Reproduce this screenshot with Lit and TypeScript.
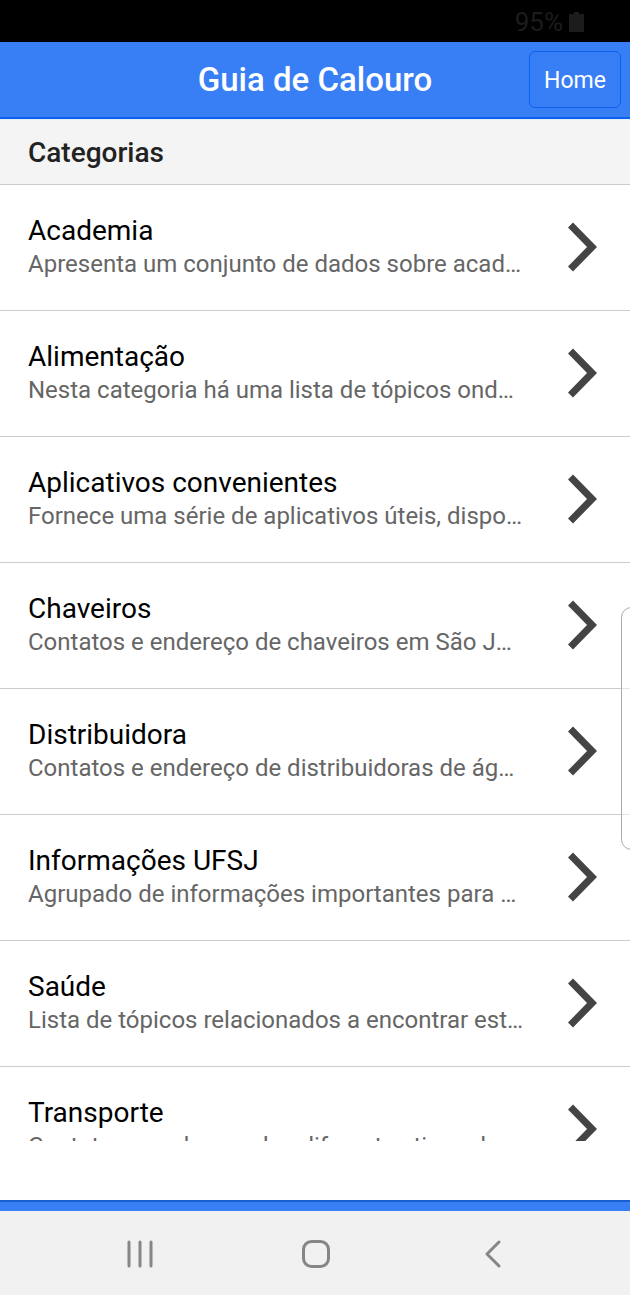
import { LitElement, html, css } from "lit";
import { customElement, property } from "lit/decorators.js";

interface Category {
  name: string;
  summary: string;
}

const CATEGORIES: Category[] = [
  { name: "Academia", summary: "Apresenta um conjunto de dados sobre acad…" },
  { name: "Alimentação", summary: "Nesta categoria há uma lista de tópicos ond…" },
  { name: "Aplicativos convenientes", summary: "Fornece uma série de aplicativos úteis, dispo…" },
  { name: "Chaveiros", summary: "Contatos e endereço de chaveiros em São J…" },
  { name: "Distribuidora", summary: "Contatos e endereço de distribuidoras de ág…" },
  { name: "Informações UFSJ", summary: "Agrupado de informações importantes para …" },
  { name: "Saúde", summary: "Lista de tópicos relacionados a encontrar est…" },
  { name: "Transporte", summary: "Contatos e endereço dos diferentes tipos de …" },
];

@customElement("category-item")
export class CategoryItem extends LitElement {
  @property({ attribute: false }) category!: Category;

  static styles = css`
    :host {
      display: block;
    }
    .row {
      display: flex;
      align-items: center;
      justify-content: space-between;
      gap: 28px;
      padding: 29px 33px 30px 28px;
      border-bottom: 1px solid #ccc;
      color: #000;
      text-decoration: none;
    }
    .text {
      min-width: 0;
    }
    .name {
      margin: 0;
      font-size: 28px;
      line-height: 34px;
      font-weight: 400;
    }
    .summary {
      margin: 0;
      font-size: 24px;
      line-height: 32px;
      color: #666;
      white-space: nowrap;
      overflow: hidden;
    }
    .chevron {
      flex: none;
      width: 29px;
      height: 50px;
      fill: #444;
    }
  `;

  render() {
    return html`
      <a class="row" href="#">
        <div class="text">
          <h3 class="name">${this.category.name}</h3>
          <p class="summary">${this.category.summary}</p>
        </div>
        <svg class="chevron" viewBox="0 0 29 50" aria-hidden="true">
          <path d="M5 .5L29 25 5 49.500 0 44.500 19 25 0 5.500Z" />
        </svg>
      </a>
    `;
  }
}

@customElement("app-root")
export class AppRoot extends LitElement {
  static styles = css`
    :host {
      display: flex;
      flex-direction: column;
      height: 100vh;
      overflow: hidden;
      position: relative;
      background: #fff;
      font-family: Roboto, sans-serif;
    }
    .status {
      flex: none;
      display: flex;
      justify-content: flex-end;
      align-items: center;
      gap: 6px;
      padding: 6px 46px 4px;
      background: #000;
      color: #1c1c1c;
      font-size: 26px;
      line-height: 32px;
    }
    .battery {
      width: 15px;
      height: 20px;
      fill: currentColor;
    }
    .bar {
      flex: none;
      display: grid;
      grid-template-columns: 1fr auto 1fr;
      align-items: center;
      padding: 9px;
      background: #387ef5;
      border-bottom: 2px solid #0c60ee;
      color: #fff;
    }
    .title {
      grid-column: 2;
      margin: 0;
      font-size: 33px;
      line-height: 40px;
      font-weight: 500;
    }
    .home {
      justify-self: end;
      padding: 13px 14px 10px;
      border: 1px solid #0c60ee;
      border-radius: 6px;
      background: transparent;
      color: inherit;
      font: 400 23px/32px Roboto, sans-serif;
    }
    .heading {
      flex: none;
      margin: 0;
      padding: 17px 28px 15px;
      border-top: 1px solid #e8eef8;
      border-bottom: 1px solid #ccc;
      background: #f4f4f4;
      color: #222;
      font-size: 28px;
      line-height: 32px;
      font-weight: 500;
    }
    .list {
      flex: 1;
      min-height: 0;
      margin: 0 0 59px;
      padding: 0;
      overflow: hidden;
      list-style: none;
    }
    .footer {
      flex: none;
      height: 9px;
      border-top: 2px solid #1a5fd0;
      background: #387ef5;
    }
    .nav {
      flex: none;
      display: grid;
      grid-template-columns: repeat(3, 176px);
      justify-content: center;
      padding: 22px 0 22px 2px;
      background: #f1f1f1;
    }
    .key {
      display: flex;
      justify-content: center;
      padding: 5px 0;
      border: 0;
      background: none;
    }
    .glyph {
      width: 30px;
      height: 30px;
      fill: none;
      stroke: #868686;
      stroke-width: 3;
      stroke-linecap: round;
      stroke-linejoin: round;
    }
    .edge {
      position: absolute;
      right: -12px;
      top: 607px;
      width: 19px;
      height: 241px;
      border: 1px solid #aaa;
      border-radius: 12px;
      background: rgba(255, 255, 255, 0.5);
    }
  `;

  render() {
    return html`
      <div class="status">
        <span>95%</span>
        <svg class="battery" viewBox="0 0 15 20" aria-hidden="true">
          <path d="M5 0h5v2h5v18H0V2h5Z" />
        </svg>
      </div>
      <header class="bar">
        <h1 class="title">Guia de Calouro</h1>
        <button class="home">Home</button>
      </header>
      <h2 class="heading">Categorias</h2>
      <ul class="list">
        ${CATEGORIES.map(
          (category) => html`<li><category-item .category=${category}></category-item></li>`
        )}
      </ul>
      <div class="footer"></div>
      <nav class="nav">
        <button class="key" aria-label="Recentes">
          <svg class="glyph" viewBox="0 0 30 30"><path d="M4 4v24M15 4v24M26 4v24" /></svg>
        </button>
        <button class="key" aria-label="Início">
          <svg class="glyph" viewBox="0 0 30 30"><rect x="2.500" y="3.500" width="25" height="25" rx="8" /></svg>
        </button>
        <button class="key" aria-label="Voltar">
          <svg class="glyph" viewBox="0 0 30 30"><path d="M22 4L10 16 22 28" /></svg>
        </button>
      </nav>
      <div class="edge"></div>
    `;
  }
}
